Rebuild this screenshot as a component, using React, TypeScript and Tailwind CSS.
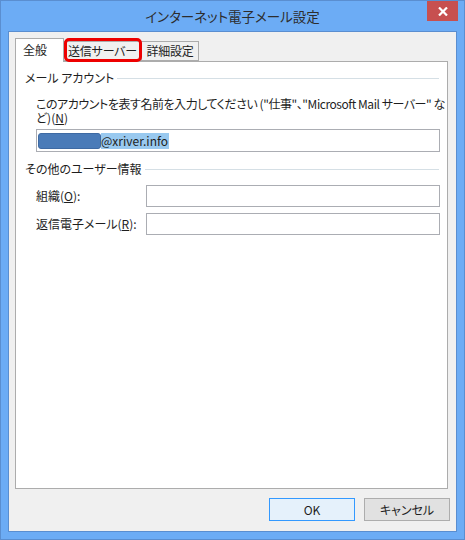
const font = "font-['Noto_Sans_CJK_JP','Noto_Sans',sans-serif] [font-feature-settings:'palt']";

const GroupHeader = ({ label }: { label: string }) => {
  return (
    <div className="flex items-center h-[16px]">
      <span className="whitespace-nowrap">{label}</span>
      <div className="flex-1 h-px bg-[#d5dfe5] ml-[3px] mr-[1px]"></div>
    </div>
  );
};

const TextBox = ({ className = "" }: { className?: string }) => {
  return <div className={`bg-white border border-[#abadb3] ${className}`}></div>;
};

const Tab = ({ label, width, selected }: { label: string; width: string; selected?: boolean }) => {
  if (selected) {
    return (
      <div className={`relative z-10 h-[24px] ${width} bg-white border border-[#acacac] border-b-0 pl-[7px] pt-[2px] -mb-px`}>
        {label}
      </div>
    );
  }
  return (
    <div className={`h-[20px] ${width} mt-[3px] bg-[#f0f0f0] border border-[#acacac] border-l-0 flex items-center justify-center tracking-[-0.2px]`}>
      {label}
    </div>
  );
};

export default function App() {
  return (
    <div
      className={`w-[465px] h-[540px] bg-[#6cacf5] border border-[#5a8ed0] flex flex-col text-[12px] text-[#1e1e1e] ${font}`}
    >
      {/* title bar */}
      <div className="relative h-[30px] flex items-center justify-center">
        <span className="text-[13.5px] text-[#2d2d2d] mt-[1px]">インターネット電子メール設定</span>
        <div className="absolute right-[6px] top-0 w-[31px] h-[20px] bg-[#c75050] flex items-center justify-center">
          <svg width="10" height="9" viewBox="0 0 10 9">
            <path d="M1 0.5 L9 8.5 M9 0.5 L1 8.5" stroke="white" strokeWidth="2.2" />
          </svg>
        </div>
      </div>

      {/* client area */}
      <div className="mx-[7px] h-[501px] bg-[#f0f0f0] border border-[#5a8ed0] flex flex-col px-[6px] pt-[6px]">
        {/* tabs */}
        <div className="relative flex items-start h-[23px]">
          <Tab label="全般" width="w-[49px]" selected />
          <Tab label="送信サーバー" width="w-[78px]" />
          <Tab label="詳細設定" width="w-[57px]" />
          <div className="absolute left-[49px] top-[0px] w-[78px] h-[24px] border-[3px] border-[#ee0000] rounded-[5px]"></div>
        </div>

        {/* tab panel */}
        <div className="h-[428px] bg-white border border-[#acacac] w-[433px] pl-[9px] pr-[7px] pt-[8px]">
          <GroupHeader label="メール アカウント" />
          <div className="pl-[11px] mt-[11px] whitespace-nowrap">
            <div className="h-[14px] leading-[14px] tracking-[-0.45px]">
              このアカウントを表す名前を入力してください ("仕事"、"Microsoft Mail サーバー" な
            </div>
            <div className="h-[14px] leading-[14px]">
              ど)(<span className="underline">N</span>)
            </div>
          </div>
          <div className="ml-[11px] mt-[4px] h-[23px] bg-white border border-[#abadb3] flex items-center pl-[1px]">
            <span className="h-[16px] w-[63px] bg-[#4a7bb8] border border-[#3e6aa3] rounded-[3px]"></span>
            <span className="h-[16px] bg-[#99c9ef] leading-[16px] pr-[1px]">@xriver.info</span>
          </div>

          <div className="mt-[9px]">
            <GroupHeader label="その他のユーザー情報" />
          </div>
          <div className="pl-[11px] mt-[8px] flex flex-col gap-[6px]">
            <div className="flex items-center h-[22px]">
              <span className="w-[110px]">
                組織(<span className="underline">O</span>):
              </span>
              <TextBox className="flex-1 h-[22px]" />
            </div>
            <div className="flex items-center h-[22px]">
              <span className="w-[110px]">
                返信電子メール(<span className="underline">R</span>):
              </span>
              <TextBox className="flex-1 h-[22px]" />
            </div>
          </div>
        </div>

        {/* buttons */}
        <div className="flex justify-end gap-[9px] mt-[9px]">
          <button className="w-[86px] h-[23px] bg-[#e5f1fb] border border-[#3399ff] text-[12px]">
            OK
          </button>
          <button className="w-[86px] h-[23px] bg-[#e1e1e1] border border-[#adadad] text-[12px]">
            キャンセル
          </button>
        </div>
      </div>
    </div>
  );
}
